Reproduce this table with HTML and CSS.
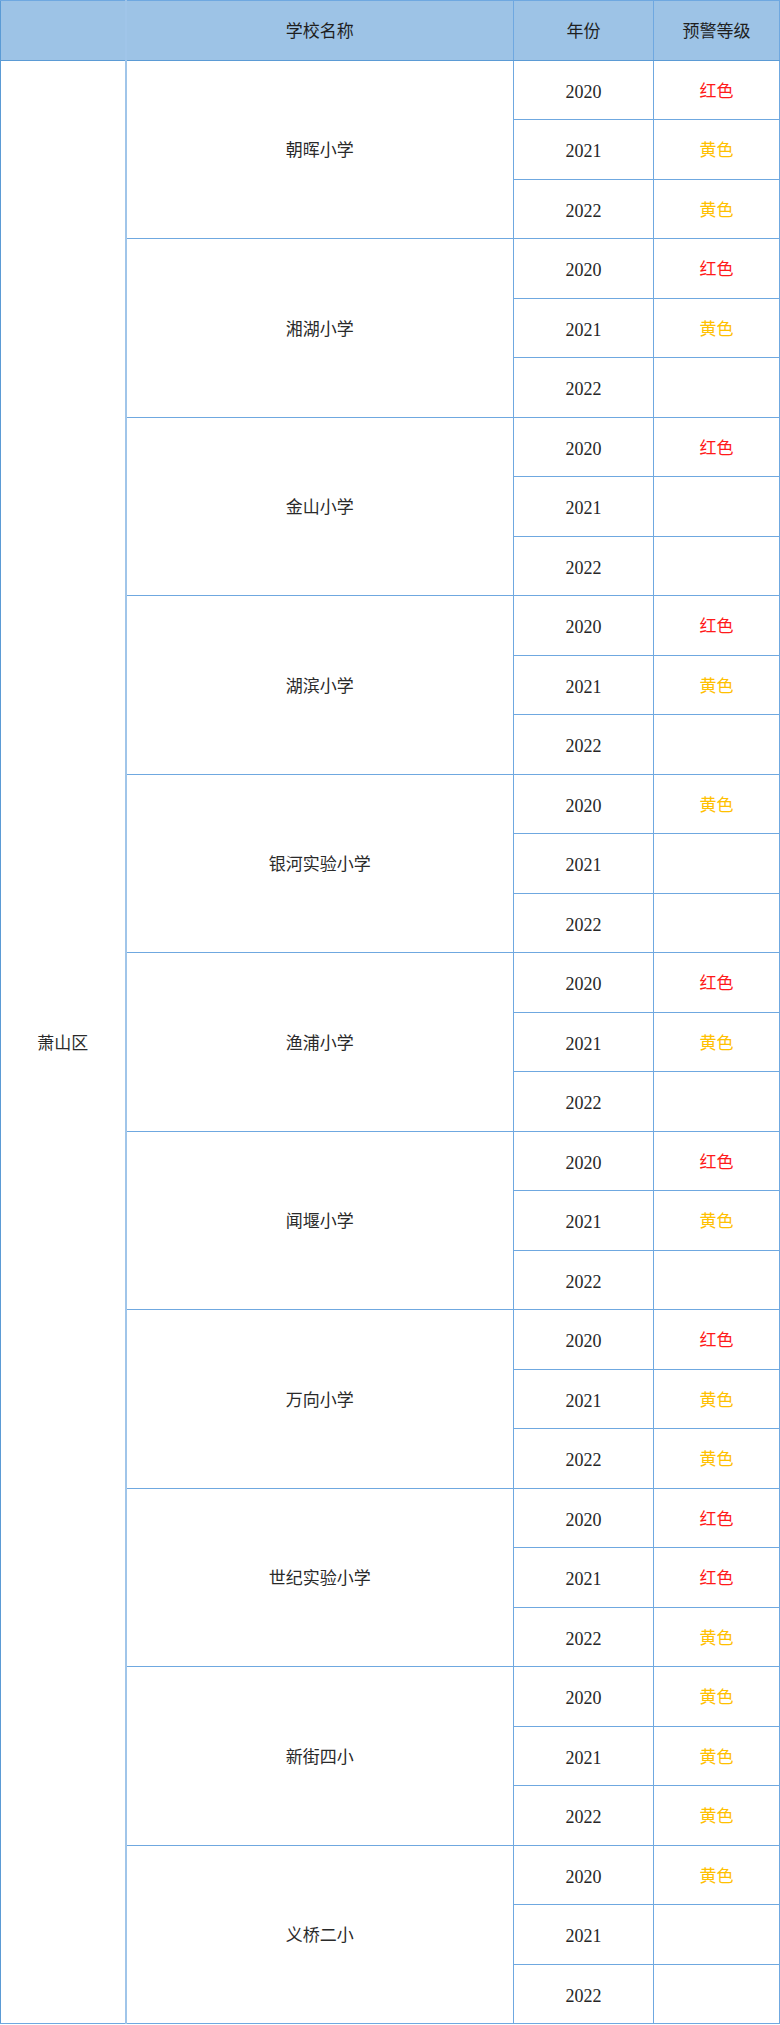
FILE: index.html
```html
<!DOCTYPE html>
<html lang="zh">
<head>
<meta charset="utf-8">
<title>预警等级</title>
<link rel="stylesheet" href="styles.css">
</head>
<body>
<table class="warn-table">
  <colgroup>
    <col class="c-district">
    <col class="c-school">
    <col class="c-year">
    <col class="c-level">
  </colgroup>
  <thead>
    <tr>
      <th class="district"></th>
      <th>学校名称</th>
      <th>年份</th>
      <th>预警等级</th>
    </tr>
  </thead>
  <tbody>
    <tr><td class="district" rowspan="33">萧山区</td><td rowspan="3">朝晖小学</td><td class="year">2020</td><td class="red">红色</td></tr>
    <tr><td class="year">2021</td><td class="yellow">黄色</td></tr>
    <tr><td class="year">2022</td><td class="yellow">黄色</td></tr>

    <tr><td rowspan="3">湘湖小学</td><td class="year">2020</td><td class="red">红色</td></tr>
    <tr><td class="year">2021</td><td class="yellow">黄色</td></tr>
    <tr><td class="year">2022</td><td></td></tr>

    <tr><td rowspan="3">金山小学</td><td class="year">2020</td><td class="red">红色</td></tr>
    <tr><td class="year">2021</td><td></td></tr>
    <tr><td class="year">2022</td><td></td></tr>

    <tr><td rowspan="3">湖滨小学</td><td class="year">2020</td><td class="red">红色</td></tr>
    <tr><td class="year">2021</td><td class="yellow">黄色</td></tr>
    <tr><td class="year">2022</td><td></td></tr>

    <tr><td rowspan="3">银河实验小学</td><td class="year">2020</td><td class="yellow">黄色</td></tr>
    <tr><td class="year">2021</td><td></td></tr>
    <tr><td class="year">2022</td><td></td></tr>

    <tr><td rowspan="3">渔浦小学</td><td class="year">2020</td><td class="red">红色</td></tr>
    <tr><td class="year">2021</td><td class="yellow">黄色</td></tr>
    <tr><td class="year">2022</td><td></td></tr>

    <tr><td rowspan="3">闻堰小学</td><td class="year">2020</td><td class="red">红色</td></tr>
    <tr><td class="year">2021</td><td class="yellow">黄色</td></tr>
    <tr><td class="year">2022</td><td></td></tr>

    <tr><td rowspan="3">万向小学</td><td class="year">2020</td><td class="red">红色</td></tr>
    <tr><td class="year">2021</td><td class="yellow">黄色</td></tr>
    <tr><td class="year">2022</td><td class="yellow">黄色</td></tr>

    <tr><td rowspan="3">世纪实验小学</td><td class="year">2020</td><td class="red">红色</td></tr>
    <tr><td class="year">2021</td><td class="red">红色</td></tr>
    <tr><td class="year">2022</td><td class="yellow">黄色</td></tr>

    <tr><td rowspan="3">新街四小</td><td class="year">2020</td><td class="yellow">黄色</td></tr>
    <tr><td class="year">2021</td><td class="yellow">黄色</td></tr>
    <tr><td class="year">2022</td><td class="yellow">黄色</td></tr>

    <tr><td rowspan="3">义桥二小</td><td class="year">2020</td><td class="yellow">黄色</td></tr>
    <tr><td class="year">2021</td><td></td></tr>
    <tr><td class="year">2022</td><td></td></tr>
  </tbody>
</table>
</body>
</html>
```

FILE: styles.css
```css
html, body {
  margin: 0;
  padding: 0;
  background: #ffffff;
}

.warn-table {
  width: 779px;
  border-collapse: collapse;
  table-layout: fixed;
  font-family: "Noto Sans CJK SC", sans-serif;
  font-size: 17px;
  line-height: 20px;
  color: #2a2a2a;
  border: 1px solid #5b9bd5;
}

.c-district { width: 125px; }
.c-school { width: 388px; }
.c-year { width: 140px; }
.c-level { width: 126px; }

.warn-table tr {
  height: 59.5px;
}

.warn-table th,
.warn-table td {
  padding: 0;
  text-align: center;
  vertical-align: middle;
  border: 1px solid #6fa8e0;
  font-weight: normal;
}

.warn-table thead th {
  background: #9dc3e6;
  color: #1f1f1f;
  border-bottom: 1px solid #5b9bd5;
}

.warn-table .district {
  border-right: 2px solid #a0c5e9;
  border-left: 1px solid #5b9bd5;
}

.warn-table .year {
  font-family: "Liberation Serif", serif;
  font-size: 18px;
  color: #262626;
  padding-top: 4px;
}

.red { color: #ff1a1a; }
.yellow { color: #ffc000; }
```
